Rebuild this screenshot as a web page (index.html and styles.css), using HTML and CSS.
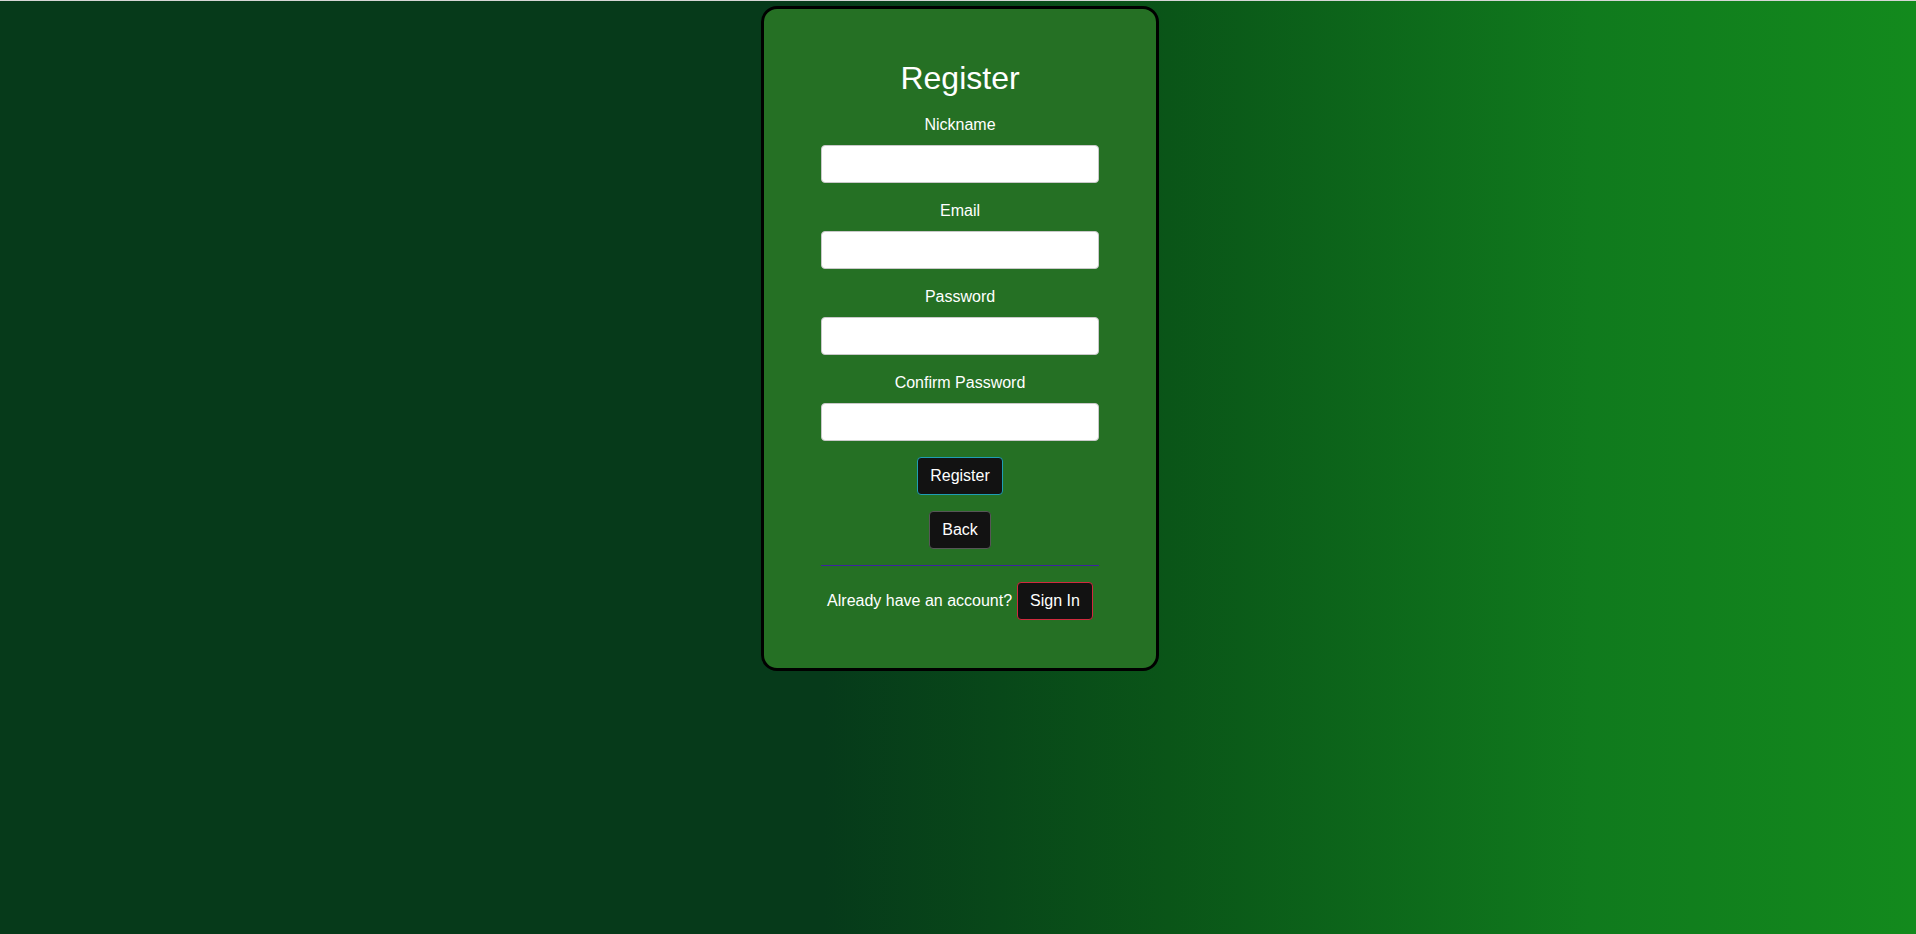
FILE: index.html
```html
<!DOCTYPE html>
<html lang="en">
<head>
<meta charset="utf-8">
<title>Register</title>
<link rel="stylesheet" href="styles.css">
</head>
<body>
<main class="page">
  <form class="card">
    <h2 class="title">Register</h2>
    <div class="field">
      <label class="label" for="nick">Nickname</label>
      <input class="input" id="nick" type="text">
    </div>
    <div class="field">
      <label class="label" for="email">Email</label>
      <input class="input" id="email" type="email">
    </div>
    <div class="field">
      <label class="label" for="pw">Password</label>
      <input class="input" id="pw" type="password">
    </div>
    <div class="field">
      <label class="label" for="pw2">Confirm Password</label>
      <input class="input" id="pw2" type="password">
    </div>
    <button class="btn btn-register" type="button">Register</button>
    <button class="btn btn-back" type="button">Back</button>
    <hr class="divider">
    <div class="signin-row">
      <span class="signin-text">Already have an account?</span>
      <button class="btn btn-signin" type="button">Sign In</button>
    </div>
  </form>
</main>
</body>
</html>
```
FILE: styles.css
```css
html, body {
  margin: 0;
  padding: 0;
  height: 100%;
}
body {
  font-family: "Liberation Sans", Arial, sans-serif;
  color: #ffffff;
  border-top: 1px solid #d6d6d6;
  box-sizing: border-box;
  background: linear-gradient(90deg, #063a1a 0%, #063a1a 43%, #0a5518 61%, #107a1d 83%, #138a1d 100%);
}
.page {
  display: flex;
  justify-content: center;
  padding-top: 5px;
}
.card {
  width: 392px;
  margin-left: 4px;
  border: 3px solid #000;
  border-radius: 16px;
  background: #257024;
  padding: 51px 0 48px;
  display: flex;
  flex-direction: column;
  align-items: center;
}
.title {
  margin: 0 0 20px;
  font-size: 32px;
  line-height: 36px;
  font-weight: 400;
}
.field {
  display: flex;
  flex-direction: column;
  align-items: center;
  margin-bottom: 19px;
}
.field:nth-of-type(4) {
  margin-bottom: 16px;
}
.label {
  font-size: 16px;
  line-height: 18px;
  margin-bottom: 11px;
}
.input {
  box-sizing: border-box;
  width: 278px;
  height: 38px;
  margin: 0;
  border: 1px solid #c9c9c9;
  border-radius: 4px;
  background: #fff;
  padding: 0 8px;
  font-family: inherit;
  font-size: 16px;
}
.btn {
  box-sizing: border-box;
  height: 38px;
  padding: 0 12px;
  border: 1px solid #555;
  border-radius: 4px;
  background: #121212;
  color: #fff;
  font-family: inherit;
  font-size: 16px;
  line-height: 20px;
  cursor: pointer;
}
.btn-register {
  border-color: #1f9db3;
  margin-bottom: 16px;
}
.btn-back {
  border-color: #565656;
}
.divider {
  width: 278px;
  height: 1px;
  margin: 16px 0;
  border: 0;
  background: #3d22a0;
}
.signin-row {
  display: flex;
  align-items: center;
  gap: 5px;
}
.signin-text {
  font-size: 16px;
  line-height: 18px;
}
.btn-signin {
  border-color: #d02a3e;
}
```
